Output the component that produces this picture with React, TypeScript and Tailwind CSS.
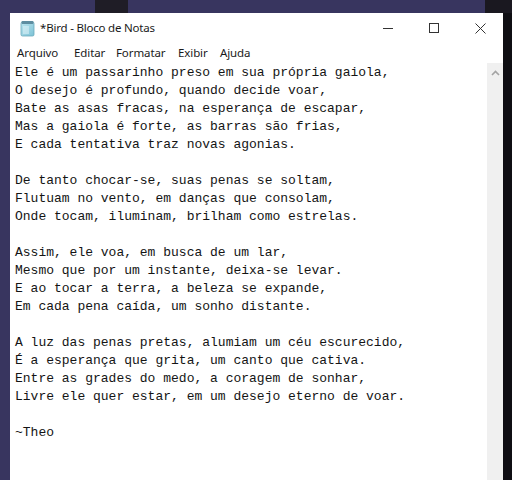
import React from "react";

const lines = [
  "Ele é um passarinho preso em sua própria gaiola,",
  "O desejo é profundo, quando decide voar,",
  "Bate as asas fracas, na esperança de escapar,",
  "Mas a gaiola é forte, as barras são frias,",
  "E cada tentativa traz novas agonias.",
  "",
  "De tanto chocar-se, suas penas se soltam,",
  "Flutuam no vento, em danças que consolam,",
  "Onde tocam, iluminam, brilham como estrelas.",
  "",
  "Assim, ele voa, em busca de um lar,",
  "Mesmo que por um instante, deixa-se levar.",
  "E ao tocar a terra, a beleza se expande,",
  "Em cada pena caída, um sonho distante.",
  "",
  "A luz das penas pretas, alumiam um céu escurecido,",
  "É a esperança que grita, um canto que cativa.",
  "Entre as grades do medo, a coragem de sonhar,",
  "Livre ele quer estar, em um desejo eterno de voar.",
  "",
  "~Theo",
];

function NotepadIcon() {
  return (
    <svg width="15" height="17" viewBox="0 0 15 17">
      <defs>
        <linearGradient id="g" x1="0" y1="0" x2="1" y2="1">
          <stop offset="0" stopColor="#bfe6ef" />
          <stop offset="1" stopColor="#7cc2d6" />
        </linearGradient>
      </defs>
      <rect x="1" y="2" width="13" height="14" rx="1.5" fill="url(#g)" stroke="#6aa9bb" strokeWidth="0.8" />
      <rect x="1.5" y="1" width="12" height="3" rx="1" fill="#5e8da0" />
      <rect x="3" y="6" width="6" height="8" fill="#e6f6fa" opacity="0.5" />
    </svg>
  );
}

export default function App() {
  return (
    <div className="w-[512px] h-[480px] overflow-hidden bg-[#38355f] flex flex-col relative">
      <div className="absolute left-[95px] top-0 w-[33px] h-[13px] bg-[#1f1d26]" />
      <div className="absolute right-0 top-0 w-[27px] h-[13px] bg-[#1a1820]" />
      <div className="flex flex-1 pt-[13px] pl-[10px]">
        <div className="flex-1 bg-white flex flex-col">
          {/* title bar */}
          <div className="h-[30px] flex items-center">
            <div className="ml-[10px] mt-[1px] flex items-center">
              <NotepadIcon />
            </div>
            <span
              className="ml-[5px] text-[11.5px] tracking-[-0.2px] text-[#1a1a1a] leading-none"
              style={{ fontFamily: '"Noto Sans", sans-serif' }}
            >
              *Bird - Bloco de Notas
            </span>
            <div className="ml-auto flex h-full">
              <div className="w-[46px] h-full flex items-center justify-center">
                <div className="w-[10px] h-[1px] bg-[#333]" />
              </div>
              <div className="w-[46px] h-full flex items-center justify-center">
                <div className="w-[10px] h-[10px] border border-[#333]" />
              </div>
              <div className="w-[46px] h-full flex items-center justify-center">
                <svg width="11" height="11" viewBox="0 0 11 11">
                  <path d="M0.5 0.5 L10.5 10.5 M10.5 0.5 L0.5 10.5" stroke="#333" strokeWidth="1" />
                </svg>
              </div>
            </div>
          </div>
          {/* menu bar */}
          <div
            className="h-[20px] flex items-center pl-[7px] text-[11.5px] tracking-[-0.1px] text-[#1a1a1a]"
            style={{ fontFamily: '"Noto Sans", sans-serif' }}
          >
            <span className="w-[57px]">Arquivo</span>
            <span className="w-[42px]">Editar</span>
            <span className="w-[62px]">Formatar</span>
            <span className="w-[42px]">Exibir</span>
            <span>Ajuda</span>
          </div>
          {/* edit area */}
          <div className="flex flex-1 min-h-0">
            <div
              className="flex-1 pl-[5px] pt-[1px] text-[13px] leading-[18px] text-[#141414] whitespace-pre"
              style={{ fontFamily: '"Liberation Mono", monospace' }}
            >
              {lines.map((l, i) => (
                <div key={i} className="h-[18px]">
                  {l}
                </div>
              ))}
            </div>
            <div className="w-[16px] bg-[#f0f0f0] flex flex-col items-center">
              <svg width="9" height="6" viewBox="0 0 9 6" className="mt-[7px]">
                <path d="M1 5 L4.5 1.5 L8 5" fill="none" stroke="#a3a3a3" strokeWidth="1.6" />
              </svg>
            </div>
          </div>
        </div>
        <div className="w-[9px] bg-[#0f0e13]" />
      </div>
    </div>
  );
}
